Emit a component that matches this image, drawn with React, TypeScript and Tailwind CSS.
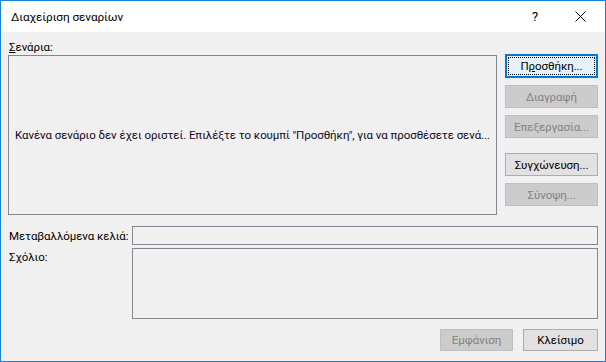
export default function App() {
  const btn = "h-[23px] w-[93px] flex items-center justify-center border";
  const enabled = "bg-[#e1e1e1] border-[#adadad] text-black";
  const disabled = "bg-[#cccccc] border-[#bfbfbf] text-[#838383]";
  return (
    <div className="w-[606px] h-[362px] border border-[#1883d7] bg-[#f0f0f0] flex flex-col text-[11.5px] leading-[16px] tracking-[-0.07px] text-black font-['Roboto',sans-serif] overflow-hidden whitespace-nowrap">
      <div className="h-[31px] bg-white flex items-center shrink-0">
        <span className="pl-[10px] flex-1 text-[11.8px]">Διαχείριση σεναρίων</span>
        <span className="w-[10px] text-[13px] mr-[35px] text-center">?</span>
        <svg width="11" height="11" viewBox="0 0 11 11" className="mr-[19px]">
          <path d="M0.5 0.5 L10.5 10.5 M10.5 0.5 L0.5 10.5" stroke="#000" strokeWidth="1" fill="none" />
        </svg>
      </div>
      <div className="flex-1 flex flex-col px-[7px] pt-[7px]">
        <div className="flex gap-[8px]">
          <div className="flex flex-col w-[489px]">
            <div className="h-[16px] pl-[1px]"><span className="underline">Σ</span>ενάρια:</div>
            <div className="h-[160px] border border-[#828790] flex items-center justify-center text-[#10081c]">
              Κανένα σενάριο δεν έχει οριστεί. Επιλέξτε το κουμπί "Προσθήκη", για να προσθέσετε σενά...
            </div>
          </div>
          <div className="flex flex-col w-[93px] pt-[15px]">
            <div className="h-[24px] w-[93px] border-2 border-[#0078d7] bg-[#e5f1fb] p-[1px]">
              <div className="h-full w-full border border-dotted border-black flex items-center justify-center">
                <span>Π<span className="underline">ρ</span>οσθήκη...</span>
              </div>
            </div>
            <div className={`${btn} ${disabled} mt-[7px]`}>Διαγραφή</div>
            <div className={`${btn} ${disabled} mt-[7px]`}>Επεξεργασία...</div>
            <div className={`${btn} ${enabled} mt-[15px]`}>
              <span>Συγ<span className="underline">χ</span>ώνευση...</span>
            </div>
            <div className={`${btn} ${disabled} mt-[7px]`}>Σύνοψη...</div>
          </div>
        </div>
        <div className="flex mt-[11px]">
          <div className="w-[124px] pl-[1px] flex items-center">Μεταβαλλόμενα κελιά:</div>
          <div className="flex-1 h-[19px] border border-[#828790]" />
        </div>
        <div className="flex mt-[3px]">
          <div className="w-[124px] pl-[1px] pt-[1px]">Σχόλιο:</div>
          <div className="flex-1 h-[71px] border border-[#828790]" />
        </div>
        <div className="flex justify-end gap-[10px] mt-[10px]">
          <div className={`h-[22px] w-[73px] flex items-center justify-center border ${disabled}`}>Εμφάνιση</div>
          <div className={`h-[22px] w-[75px] flex items-center justify-center border ${enabled}`}>Κλείσιμο</div>
        </div>
      </div>
    </div>
  );
}
